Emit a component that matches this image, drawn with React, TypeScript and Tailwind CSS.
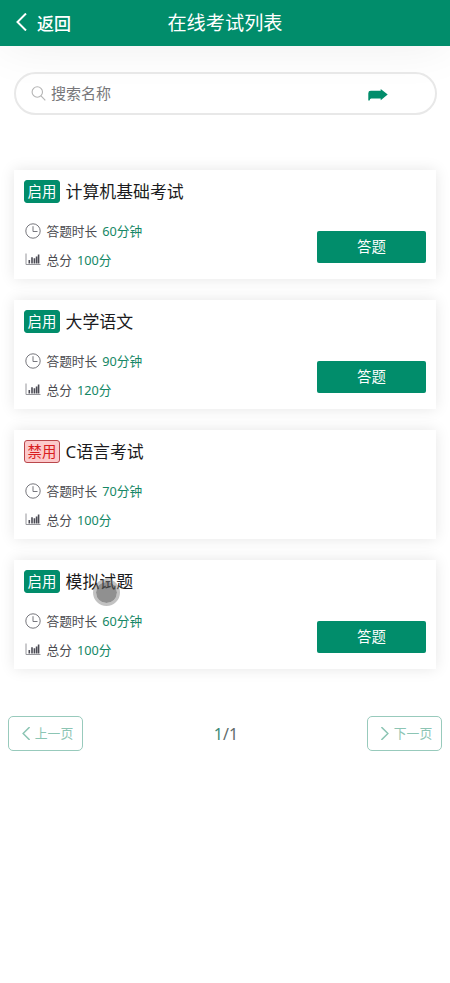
import { useState } from 'react';

type Exam = {
    id: number;
    name: string;
    enabled: boolean;
    duration: number;
    score: number;
};

const exams: Exam[] = [
    { id: 1, name: '计算机基础考试', enabled: true, duration: 60, score: 100 },
    { id: 2, name: '大学语文', enabled: true, duration: 90, score: 120 },
    { id: 3, name: 'C语言考试', enabled: false, duration: 70, score: 100 },
    { id: 4, name: '模拟试题', enabled: true, duration: 60, score: 100 },
];

const ClockIcon = () => (
    <svg className="w-4 h-4 shrink-0" viewBox="0 0 16 16" fill="none" stroke="#77777d" strokeWidth="1">
        <circle cx="8" cy="8" r="7.2" />
        <path d="M8 3.2V8.5H12.5" />
    </svg>
);

const ChartIcon = () => (
    <svg className="w-4 h-4 shrink-0" viewBox="0 0 16 16" fill="none">
        <path d="M1 1.5V12.5H15.5" stroke="#96969b" strokeWidth="1" />
        <path d="M4.3 11.5V8M7 11.5V5.2M9.4 11.5V6.2M11.6 11.5V4.5M13.6 11.5V2.5" stroke="#4c4c55" strokeWidth="1.6" />
    </svg>
);

const Chevron = ({ d, className }: { d: string; className: string }) => (
    <svg className={className} viewBox="0 0 10 18" fill="none" stroke="currentColor">
        <path d={d} />
    </svg>
);

const ExamCard = ({ exam }: { exam: Exam }) => (
    <div className="flex justify-between h-[109px] pl-[10px] pr-[10px] bg-white shadow-[0_0_14px_rgba(0,0,0,0.1)]">
        <div className="flex flex-col">
            <div className="flex items-center mt-[10px] h-[23px]">
                <span
                    className={`flex items-center justify-center w-9 h-[23px] pt-px rounded-[3px] border text-[14.4px] leading-none ${
                        exam.enabled
                            ? 'bg-[#018d6b] border-[#018d6b] text-white'
                            : 'bg-[#fcc9cb] border-[#b9474b] text-[#d91c20]'
                    }`}
                >
                    {exam.enabled ? '启用' : '禁用'}
                </span>
                <span className="ml-[5.5px] pt-[2px] text-[16.9px] leading-none text-[#1b1b20]">{exam.name}</span>
            </div>
            <div className="flex items-center mt-[18px] ml-[0.5px] h-5 text-[12.7px] leading-none text-[#4b4b50]">
                <ClockIcon />
                <span className="ml-[6px]">答题时长</span>
                <span className="ml-[5px] text-[#148765]">{exam.duration}分钟</span>
            </div>
            <div className="flex items-center mt-[9px] ml-[0.5px] h-5 text-[12.7px] leading-none text-[#4b4b50]">
                <ChartIcon />
                <span className="ml-[6px]">总分</span>
                <span className="ml-[5px] text-[#148765]">{exam.score}分</span>
            </div>
        </div>
        {exam.enabled && (
            <button className="mt-[61px] w-[109px] h-8 rounded-[2px] bg-[#018d6b] text-[14.4px] leading-none text-white">
                答题
            </button>
        )}
    </div>
);

export default function App() {
    const [keyword, setKeyword] = useState('');

    return (
        <div className="relative h-[983px] overflow-hidden bg-white font-['Noto_Sans','Noto_Sans_CJK_SC',sans-serif]">
            {/* 顶部导航 */}
            <header className="grid grid-cols-[1fr_auto_1fr] items-center h-[46px] bg-[#018d6b] text-white shadow-[0_0_50px_rgba(0,0,0,0.07)]">
                <button className="flex items-center pl-[15px] text-[17px] leading-none font-medium">
                    <Chevron d="M10 0.5L1.5 9L10 17.5" className="w-[12px] h-[18px] mr-[10px] -mt-[3px] stroke-2" />
                    返回
                </button>
                <h1 className="text-[19.2px] leading-none">在线考试列表</h1>
            </header>

            {/* 搜索 */}
            <div className="flex items-center mt-[26px] ml-[14px] mr-[13px] h-[43px] pl-[15px] pr-[47px] border-2 border-[#e8e8e8] rounded-full">
                <svg className="w-4 h-4 shrink-0" viewBox="0 0 16 16" fill="none" stroke="#b5b5b5" strokeWidth="1.1">
                    <circle cx="6.3" cy="6" r="5.2" />
                    <path d="M10 9.8L14.3 14.3" />
                </svg>
                <input
                    className="flex-1 min-w-0 ml-1 text-[15px] outline-none placeholder:text-[#77777a]"
                    placeholder="搜索名称"
                    value={keyword}
                    onChange={(e) => setKeyword(e.target.value)}
                />
                <svg className="w-5 h-3 mt-[2px]" viewBox="0 0 20 12" fill="#018d6b">
                    <path d="M0.3 11.6V4.2Q0.3 1.8 2.8 1.8H12.7V0L19.7 5.6L12.7 11.2V9.4H3.2Q1.8 9.4 1.6 11.6Z" />
                </svg>
            </div>

            {/* 考试列表 */}
            <main className="flex flex-col gap-[21px] mt-[55px] mx-[14px]">
                {exams.map((exam) => (
                    <ExamCard key={exam.id} exam={exam} />
                ))}
            </main>

            {/* 分页 */}
            <footer className="flex items-center justify-between mt-[47px] px-2 text-[12.8px] leading-none text-[#8cc5b4]">
                <button className="flex items-center justify-center w-[75px] h-[35px] pl-1 border-[1.5px] border-[#98cabc] rounded-[5px]">
                    <Chevron d="M10 0L1 9L10 18" className="w-2 h-[13px] mr-[5px] stroke-2" />
                    上一页
                </button>
                <span className="pl-[2px] text-base leading-none text-[#5f6b6b]">
                    <span className="text-[#3c8a75]">1</span>/1
                </span>
                <button className="flex items-center justify-center w-[75px] h-[35px] pl-1 border-[1.5px] border-[#98cabc] rounded-[5px]">
                    <Chevron d="M0 0L9 9L0 18" className="w-2 h-[13px] mr-[5px] stroke-2" />
                    下一页
                </button>
            </footer>

            {/* 触摸点 */}
            <div className="absolute left-[93px] top-[579px] w-[27px] h-[27px] rounded-full border-[3px] border-[#777]/45 bg-[#555]/65 bg-clip-padding pointer-events-none" />
        </div>
    );
}
